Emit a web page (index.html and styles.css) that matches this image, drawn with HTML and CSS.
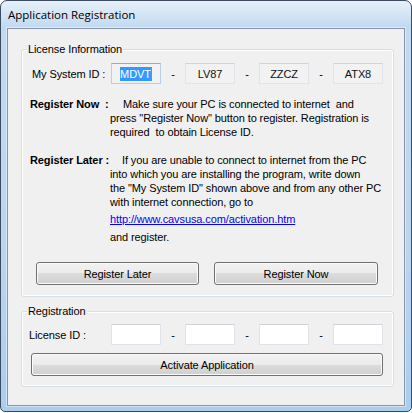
FILE: index.html
```html
<!DOCTYPE html>
<html>
<head>
<meta charset="utf-8">
<title>Application Registration</title>
<link rel="stylesheet" href="styles.css">
</head>
<body>
<div class="window">
  <div class="titlebar"><span class="title">Application Registration</span></div>
  <div class="client">
    <fieldset class="group group-license">
      <legend>License Information</legend>
      <div class="id-row id-row-system">
        <span class="id-label">My System ID :</span>
        <span class="field field-ro field-focus"><span class="sel">MDVT</span><span class="caret"></span></span>
        <span class="dash">-</span>
        <span class="field field-ro">LV87</span>
        <span class="dash">-</span>
        <span class="field field-ro">ZZCZ</span>
        <span class="dash">-</span>
        <span class="field field-ro">ATX8</span>
      </div>
      <p class="para para-now"><b class="para-label para-label-now">Register Now&nbsp; :</b>Make sure your PC is connected to internet&nbsp; and<br>press "Register Now" button to register. Registration is<br>required&nbsp; to obtain License ID.</p>
      <p class="para para-later"><b class="para-label para-label-later">Register Later :</b>If you are unable to connect to internet from the PC<br>into which you are installing the program, write down<br>the "My System ID" shown above and from any other PC<br>with internet connection, go to</p>
      <a class="link" href="#">http://www.cavsusa.com/activation.htm</a>
      <p class="after-link">and register.</p>
      <div class="button-row">
        <button class="btn btn-later">Register Later</button>
        <button class="btn btn-now">Register Now</button>
      </div>
    </fieldset>
    <fieldset class="group group-reg">
      <legend>Registration</legend>
      <div class="id-row id-row-license">
        <span class="id-label">License ID :</span>
        <span class="field field-edit"></span>
        <span class="dash">-</span>
        <span class="field field-edit"></span>
        <span class="dash">-</span>
        <span class="field field-edit"></span>
        <span class="dash">-</span>
        <span class="field field-edit"></span>
      </div>
      <button class="btn btn-activate">Activate Application</button>
    </fieldset>
  </div>
</div>
</body>
</html>
```

FILE: styles.css
```css
html, body {
  margin: 0;
  padding: 0;
}
body {
  width: 412px;
  height: 413px;
  background: #ffffff;
  font-family: "Liberation Sans", Arial, sans-serif;
  font-size: 11px;
  letter-spacing: -0.1px;
  color: #000;
  overflow: hidden;
}
.window {
  box-sizing: border-box;
  width: 412px;
  height: 412px;
  border: 1px solid #3b4c60;
  border-radius: 7px 7px 5px 5px;
  background: linear-gradient(to bottom, #e6f0fa 0px, #d9e8f6 10px, #c2d9f0 26px, #bcd5ee 60%, #aacdef 100%);
  padding: 0 6px 5px 6px;
  display: flex;
  flex-direction: column;
}
.titlebar {
  flex: 0 0 27px;
  height: 27px;
  display: flex;
  align-items: center;
  padding-left: 1px;
}
.title {
  font-family: "Open Sans", "Liberation Sans", sans-serif;
  font-size: 11.5px;
  letter-spacing: 0;
  color: #000;
}
.client {
  flex: 1 1 auto;
  min-height: 0;
  overflow: hidden;
  border: 1px solid #8396ab;
  background: #f0f0f0;
  padding: 13px 10px 0 13px;
  box-shadow: 0 0 0 1px rgba(255, 255, 255, 0.45);
}
.group {
  margin: 0;
  padding: 0;
  min-width: 0;
  border: 1px solid #d5dfe5;
  border-radius: 3px;
  box-shadow: inset 0 0 0 1px #ffffff;
  width: 373px;
  box-sizing: border-box;
}
.group legend {
  margin-left: 5px;
  padding: 0 1px;
  line-height: 14px;
  height: 14px;
  background: #f0f0f0;
}
.group-license {
  padding-bottom: 11px;
}
.group-reg {
  margin-top: 7px;
  padding-bottom: 10px;
}
.id-row {
  display: flex;
  align-items: center;
  height: 21px;
  white-space: nowrap;
}
.id-row-system {
  margin: 7px 0 0 10px;
}
.id-row-system .id-label {
  width: 79px;
}
.id-row-license {
  margin: 6px 0 0 7px;
}
.id-row-license .id-label {
  width: 82px;
}
.field {
  box-sizing: border-box;
  width: 50px;
  height: 21px;
  display: flex;
  align-items: center;
  justify-content: center;
  border: 1px solid #e2e3ea;
  border-top-color: #d2d3d8;
  color: #111;
}
.field-ro {
  background: #f2f2f2;
}
.field-edit {
  background: #ffffff;
}
.field-focus {
  border-color: #b4d0ec;
  border-top-color: #86b0da;
}
.sel {
  background: #3399ff;
  color: #fff;
  line-height: 14px;
  padding: 0 0 0 0;
}
.caret {
  width: 1px;
  height: 14px;
  background: #e8702a;
}
.dash {
  width: 24px;
  text-align: center;
}
.para {
  margin: 0;
  line-height: 14px;
  padding-left: 88px;
  text-indent: -80px;
  white-space: nowrap;
}
.para-now {
  margin-top: 13px;
}
.para-later {
  margin-top: 14px;
}
.para-label {
  display: inline-block;
  text-indent: 0;
}
.para-label-now {
  width: 93px;
}
.para-label-later {
  width: 92px;
}
.link {
  display: block;
  margin: 3px 0 0 88px;
  line-height: 14px;
  color: #0000ff;
  text-decoration: underline;
  width: max-content;
}
.after-link {
  margin: 4px 0 0 88px;
  line-height: 14px;
}
.button-row {
  display: flex;
  gap: 15px;
  margin: 18px 0 0 14px;
}
.btn {
  box-sizing: border-box;
  height: 23px;
  border: 1px solid #707070;
  border-radius: 3px;
  background: linear-gradient(to bottom, #f2f2f2 0%, #ebebeb 50%, #dddddd 50%, #cfcfcf 100%);
  box-shadow: inset 0 0 0 1px #fbfbfb;
  font-family: "Liberation Sans", Arial, sans-serif;
  font-size: 11px;
  letter-spacing: -0.1px;
  color: #000;
  padding: 0;
}
.btn-later {
  width: 163px;
}
.btn-now {
  width: 164px;
}
.btn-activate {
  display: block;
  width: 352px;
  margin: 8px 0 0 9px;
}
```
